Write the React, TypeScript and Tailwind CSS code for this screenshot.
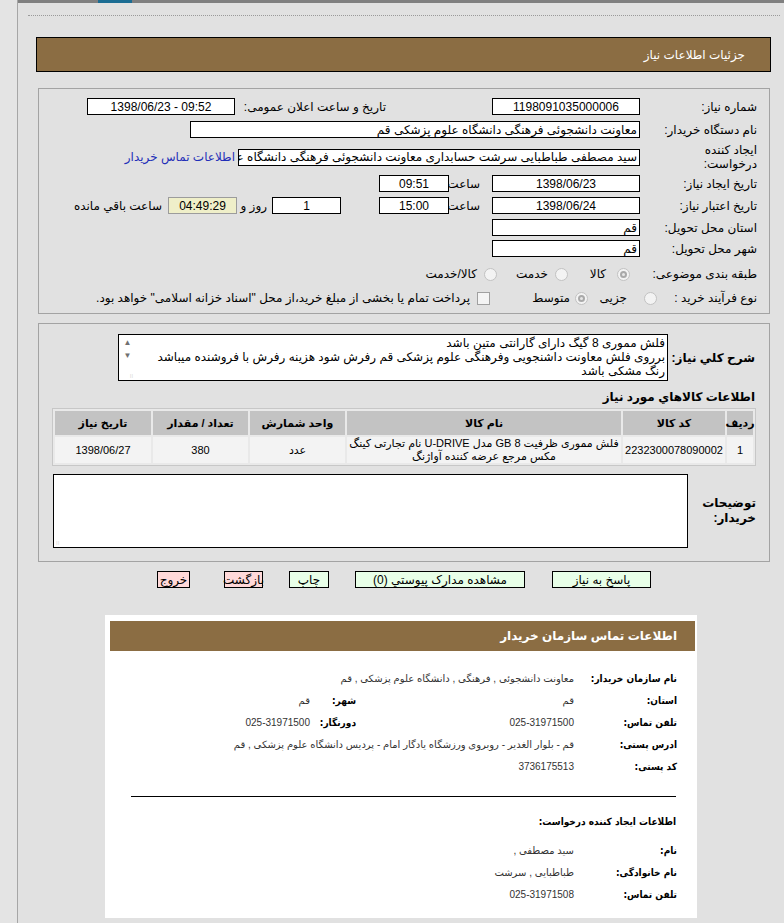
import React from "react";

function Inp({ cls = "", children, right = false, ltr = false }: { cls?: string; children?: React.ReactNode; right?: boolean; ltr?: boolean }) {
  return (
    <div
      dir={ltr ? "ltr" : undefined}
      className={`h-[17px] shrink-0 bg-white border border-black flex items-center overflow-hidden whitespace-nowrap leading-none ${right ? "justify-start pr-[2px]" : "justify-center"} ${cls}`}
    >
      {children}
    </div>
  );
}

function Radio({ checked = false, cls = "" }: { checked?: boolean; cls?: string }) {
  return (
    <div className={`w-[13px] h-[13px] shrink-0 rounded-full border border-[#c2c2c2] bg-[#f3f3f3] flex items-center justify-center ${cls}`}>
      {checked && <div className="w-[7px] h-[7px] rounded-full border-2 border-[#a9a9a9] bg-[#e6e6e6]" />}
    </div>
  );
}

function Row({ label, lw = "w-[117px]", cls = "", children }: { label: React.ReactNode; lw?: string; cls?: string; children?: React.ReactNode }) {
  return (
    <div className={`flex items-center ${cls}`}>
      <div className={`${lw} shrink-0 text-right leading-[14px]`}>{label}</div>
      {children}
    </div>
  );
}

function CardRow({ label, value, label2, value2 }: { label: string; value: string; label2?: string; value2?: string }) {
  return (
    <div className="h-[22px] flex items-center">
      <div className="w-[103px] shrink-0 text-right font-bold text-[10px] whitespace-nowrap font-['DejaVu_Sans_Condensed','DejaVu_Sans',sans-serif]">{label}</div>
      <div className="w-[218px] shrink-0 text-right text-[10px] text-[#333] whitespace-nowrap">{value}</div>
      {label2 && <div className="w-[46px] shrink-0 text-right font-bold text-[10px] whitespace-nowrap font-['DejaVu_Sans_Condensed','DejaVu_Sans',sans-serif]">{label2}</div>}
      {value2 && <div className="text-right text-[10px] text-[#333] whitespace-nowrap">{value2}</div>}
    </div>
  );
}

export default function App() {
  const th = "bg-[#c3c3c3] flex items-center justify-center font-bold text-[11px] whitespace-nowrap";
  const td = "bg-[#f3f3f3] flex items-center justify-center text-[11px] text-center leading-[13px]";
  return (
    <div dir="ltr" className="w-[784px] h-[923px] overflow-hidden bg-[#e1e1e1] flex font-['Liberation_Sans','DejaVu_Sans',sans-serif] text-[12px] text-black">
      <div className="w-[18px] shrink-0 border-r border-[#a6a6a6] bg-[#e4e4e4]" />
      <div dir="rtl" className="flex-1 flex flex-col">
        <div dir="ltr" className="h-[3px] bg-[#808080] flex">
          <div className="ml-[80px] w-[34px] bg-[#1c6d93]" />
        </div>
        <div className="mt-[12px] ml-[10px] mr-[4px] border-t border-dotted border-[#9a9a9a]" />

        <div className="mt-[21px] ml-[18px] mr-[13px] h-[35px] bg-[#8b6d43] border border-black flex items-center pr-[25px] text-white text-[12px]">
          جزئیات اطلاعات نیاز
        </div>

        {/* Box 1 */}
        <div className="mt-[16px] ml-[20px] mr-[14px] border border-[#a3a3a3] pt-[9px] pb-[6px] pr-[12px] flex flex-col">
          <Row label="شماره نیاز:" cls="h-[17px]">
            <Inp cls="w-[148px]" ltr>1198091035000006</Inp>
            <div className="w-[151px] mr-[106px] shrink-0 text-right whitespace-nowrap">تاریخ و ساعت اعلان عمومی:</div>
            <Inp cls="w-[148px]" ltr>1398/06/23 - 09:52</Inp>
          </Row>
          <Row label="نام دستگاه خریدار:" cls="h-[17px] mt-[6px]">
            <Inp cls="w-[450px]" right>معاونت دانشجوئی فرهنگی دانشگاه علوم پزشکی قم</Inp>
          </Row>
          <Row label={<>ایجاد کننده<br />درخواست:</>} cls="h-[28px] mt-[5px]">
            <Inp cls="w-[402px]" right>سید مصطفی طباطبایی سرشت حسابداری معاونت دانشجوئی فرهنگی دانشگاه علوم پزشکی قم</Inp>
            <div className="mr-[3px] text-[#1f2fb8] whitespace-nowrap">اطلاعات تماس خریدار</div>
          </Row>
          <Row label="تاریخ ایجاد نیاز:" cls="h-[17px] mt-[4px]">
            <Inp cls="w-[148px]" ltr>1398/06/23</Inp>
            <div className="w-[43px] shrink-0 pr-[12px] text-right whitespace-nowrap">ساعت</div>
            <Inp cls="w-[70px]" ltr>09:51</Inp>
          </Row>
          <Row label="تاریخ اعتبار نیاز:" cls="h-[17px] mt-[5px]">
            <Inp cls="w-[148px]" ltr>1398/06/24</Inp>
            <div className="w-[43px] shrink-0 pr-[12px] text-right whitespace-nowrap">ساعت</div>
            <Inp cls="w-[70px]" ltr>15:00</Inp>
            <Inp cls="w-[69px] mr-[38px]" ltr>1</Inp>
            <div className="w-[35px] shrink-0 pr-[5px] text-right whitespace-nowrap">روز و</div>
            <div dir="ltr" className="w-[69px] h-[17px] shrink-0 bg-[#efefc9] border border-[#9c9c9c] flex items-center justify-center leading-none">04:49:29</div>
            <div className="mr-[6px] whitespace-nowrap">ساعت باقي مانده</div>
          </Row>
          <Row label="استان محل تحویل:" cls="h-[17px] mt-[5px]">
            <Inp cls="w-[148px]" right>قم</Inp>
          </Row>
          <Row label="شهر محل تحویل:" cls="h-[17px] mt-[4px]">
            <Inp cls="w-[148px]" right>قم</Inp>
          </Row>
          <Row label="طبقه بندی موضوعی:" cls="h-[18px] mt-[8px]">
            <Radio checked cls="mr-[10px]" />
            <div className="w-[18px] mr-[11px] shrink-0 text-right whitespace-nowrap">کالا</div>
            <Radio cls="mr-[20px]" />
            <div className="w-[30px] mr-[7px] shrink-0 text-right whitespace-nowrap">خدمت</div>
            <Radio cls="mr-[21px]" />
            <div className="mr-[7px] shrink-0 text-right whitespace-nowrap">کالا/خدمت</div>
          </Row>
          <Row label="نوع فرآیند خرید :" lw="w-[97px]" cls="h-[18px] mt-[6px]">
            <Radio cls="mr-[3px]" />
            <div className="w-[23px] mr-[17px] shrink-0 text-right whitespace-nowrap">جزیی</div>
            <Radio checked cls="mr-[16px]" />
            <div className="w-[42px] mr-[5px] shrink-0 text-right whitespace-nowrap">متوسط</div>
            <div className="w-[13px] h-[13px] mr-[38px] shrink-0 border border-[#a0a0a0] bg-[#f4f4f4]" />
            <div className="mr-[7px] whitespace-nowrap">پرداخت تمام یا بخشی از مبلغ خرید،از محل "اسناد خزانه اسلامی" خواهد بود.</div>
          </Row>
        </div>

        {/* Box 2 */}
        <div className="mt-[9px] ml-[20px] mr-[14px] border border-[#a3a3a3] pt-[10px] pb-[13px] pr-[13px] pl-[13px] flex flex-col">
          <div className="flex items-center pr-[1px]">
            <div className="w-[85px] shrink-0 text-right font-bold text-[12px] whitespace-nowrap">شرح کلي نياز:</div>
            <div className="mr-[2px] w-[550px] h-[47px] bg-white border border-black flex">
              <div className="flex-1 pr-[2px] pt-[1px] text-right text-[12px] leading-[14px] overflow-hidden">
                <div className="whitespace-nowrap">فلش مموری 8 گیگ دارای گارانتی متین باشد</div>
                <div className="whitespace-nowrap">برروی فلش معاونت داشنجویی وفرهنگی علوم پزشکی قم  رفرش شود هزینه رفرش با فروشنده میباشد</div>
                <div className="whitespace-nowrap">رنگ مشکی باشد</div>
              </div>
              <div className="w-[17px] shrink-0 flex flex-col items-center text-[#707070] text-[8px] leading-none pt-[4px]">
                <div>▲</div>
                <div className="mt-[5px]">▼</div>
                <div className="mt-auto mb-[1px] ml-[8px] text-[#b5b5b5] text-[6px]">⁞⁞</div>
              </div>
            </div>
          </div>
          <div className="mt-[8px] pr-[1px] h-[15px] flex items-center font-bold text-[12px] text-right">اطلاعات کالاهاي مورد نياز</div>
          <div className="mt-[4px] border border-[#c7c7c7] bg-[#e9e9e9] p-[2px] grid grid-cols-[26px_102px_274px_95px_95px_96px] grid-rows-[24px_26px] gap-[2px]">
            <div className={th}>ردیف</div>
            <div className={th}>کد کالا</div>
            <div className={th}>نام کالا</div>
            <div className={th}>واحد شمارش</div>
            <div className={th}>تعداد / مقدار</div>
            <div className={th}>تاریخ نیاز</div>
            <div className={td}>1</div>
            <div className={td}>2232300078090002</div>
            <div className={td}>فلش مموری ظرفیت 8 GB مدل U-DRIVE نام تجارتی کینگ مکس مرجع عرضه کننده آواژنگ</div>
            <div className={td}>عدد</div>
            <div className={td}>380</div>
            <div className={td}>1398/06/27</div>
          </div>
          <div className="mt-[8px] flex items-center">
            <div className="w-[68px] shrink-0 text-right font-bold text-[12px] leading-[15px]">توضیحات<br />خریدار:</div>
            <div className="w-[635px] h-[74px] bg-white border border-black flex items-end justify-end">
              <div className="text-[6px] text-[#b5b5b5] leading-none ml-[2px] mb-[1px]">⁞⁞</div>
            </div>
          </div>
        </div>

        {/* Buttons */}
        <div className="mt-[9px] ml-[20px] mr-[14px] flex justify-center items-center">
          <div className="w-[99px] h-[17px] border border-black bg-[#e8ffe8] flex items-center justify-center leading-none">پاسخ به نیاز</div>
          <div className="mr-[27px] w-[170px] h-[17px] border border-black bg-[#e8ffe8] flex items-center justify-center leading-none">مشاهده مدارک پیوستي (0)</div>
          <div className="mr-[26px] w-[40px] h-[17px] border border-black bg-[#e8ffe8] flex items-center justify-center leading-none">چاپ</div>
          <div className="mr-[26px] w-[39px] h-[17px] border border-black bg-[#ffd9d9] flex items-center justify-center leading-none">بازگشت</div>
          <div className="mr-[34px] w-[33px] h-[17px] border border-black bg-[#ffd9d9] flex items-center justify-center leading-none">خروج</div>
        </div>

        {/* Contact card */}
        <div className="mt-[27px] mr-[87px] w-[592px] h-[303px] shrink-0 bg-white pt-[6px] pl-[5px] pr-[2px] flex flex-col">
          <div className="h-[30px] bg-[#8b6d43] flex items-center pr-[18px] text-white font-bold text-[12px]">اطلاعات تماس سازمان خریدار</div>
          <div className="mt-[16px] pr-[18px] flex flex-col">
            <CardRow label="نام سازمان خریدار:" value="معاونت دانشجوئی , فرهنگی , دانشگاه علوم پزشکی , قم" />
            <CardRow label="استان:" value="قم" label2="شهر:" value2="قم" />
            <CardRow label="تلفن تماس:" value="025-31971500" label2="دورنگار:" value2="025-31971500" />
            <CardRow label="ادرس پستی:" value="قم - بلوار الغدیر - روبروی ورزشگاه یادگار امام - پردیس دانشگاه علوم پزشکی , قم" />
            <CardRow label="کد پستی:" value="3736175513" />
          </div>
          <div className="mt-[19px] ml-[21px] mr-[19px] border-t border-black" />
          <div className="mt-[13px] pr-[19px] h-[22px] flex items-center font-bold text-[10px] font-['DejaVu_Sans_Condensed','DejaVu_Sans',sans-serif]">اطلاعات ایجاد کننده درخواست:</div>
          <div className="mt-[7px] pr-[18px] flex flex-col">
            <CardRow label="نام:" value="سید مصطفی ," />
            <CardRow label="نام خانوادگی:" value="طباطبایی , سرشت" />
            <CardRow label="تلفن تماس:" value="025-31971508" />
          </div>
        </div>
      </div>
    </div>
  );
}
